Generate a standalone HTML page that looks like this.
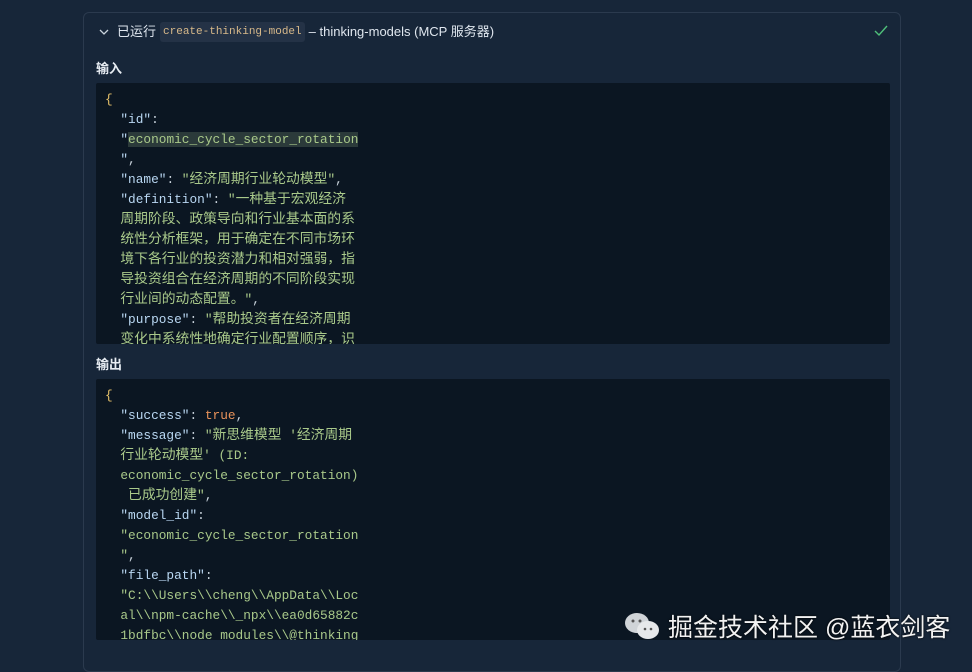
<!DOCTYPE html>
<html><head><meta charset="utf-8"><style>
*{margin:0;padding:0;box-sizing:border-box}
body{width:972px;height:661px;background:#172639;overflow:hidden;position:relative;font-family:"Liberation Sans","Noto Sans CJK SC",sans-serif;color:#e6ebf2}
.card{position:absolute;left:83px;top:12px;width:818px;height:660px;border:1px solid #2b3a4e;border-radius:6px;background:#172639}
.hdr{position:absolute;left:14px;top:9px;font-size:13px;line-height:18px;color:#dfe6ee;display:flex;align-items:center}
.chip{font-family:"Liberation Mono",monospace;font-size:11px;color:#d8b98a;background:#243246;border-radius:3px;padding:1px 3px;margin:0 4px}
.lbl{position:absolute;left:12px;font-size:13px;font-weight:bold;color:#e8edf3}
.code{position:absolute;left:12px;width:794px;height:261px;background:#0b1622;overflow:hidden;border-radius:2px;padding:7px 0 0 9px;font-family:"Liberation Mono","Noto Sans CJK SC",monospace;font-size:12.8px;line-height:20px;color:#a9c98a;white-space:pre}
.c{font-family:"Noto Sans CJK SC",sans-serif;font-size:13.8px;line-height:0}
.k{color:#b9d7f2}.p{color:#c9d3dc}.y{color:#e8c36a}.t{color:#e8925a}
.hl{background:#2b3a3a}
.wm{position:absolute;left:623px;top:608px;font-size:25px;color:#f2f2f2;text-shadow:0 0 2px #000;display:flex;align-items:center}
</style></head><body>
<div class="card">
<div class="hdr"><svg width="12" height="12" viewBox="0 0 12 12" style="margin-right:7px"><path d="M2 4l4 4 4-4" fill="none" stroke="#c9d3dc" stroke-width="1.3"/></svg>已运行<span class="chip">create-thinking-model</span>– thinking-models (MCP 服务器)</div>
<svg style="position:absolute;left:790px;top:12px" width="14" height="12" viewBox="0 0 14 12"><path d="M1 6l4 4 8-9" fill="none" stroke="#4fc07a" stroke-width="1.4"/></svg>
<div class="lbl" style="top:45px">输入</div>
<div class="code" style="top:70px"><span class="y">{</span>
  <span class="k">"id"</span><span class="p">:</span>
  <span class="k">"</span><span class="hl">economic_cycle_sector_rotation</span>
  <span class="k">"</span><span class="p">,</span>
  <span class="k">"name"</span><span class="p">:</span> "<span class="c">经济周期行业轮动模型</span>"<span class="p">,</span>
  <span class="k">"definition"</span><span class="p">:</span> "<span class="c">一种基于宏观经济</span>
  <span class="c">周期阶段、政策导向和行业基本面的系</span>
  <span class="c">统性分析框架，用于确定在不同市场环</span>
  <span class="c">境下各行业的投资潜力和相对强弱，指</span>
  <span class="c">导投资组合在经济周期的不同阶段实现</span>
  <span class="c">行业间的动态配置。</span>"<span class="p">,</span>
  <span class="k">"purpose"</span><span class="p">:</span> "<span class="c">帮助投资者在经济周期</span>
  <span class="c">变化中系统性地确定行业配置顺序，识</span></div>
<div class="lbl" style="top:341px">输出</div>
<div class="code" style="top:366px"><span class="y">{</span>
  <span class="k">"success"</span><span class="p">:</span> <span class="t">true</span><span class="p">,</span>
  <span class="k">"message"</span><span class="p">:</span> "<span class="c">新思维模型</span> '<span class="c">经济周期</span>
  <span class="c">行业轮动模型</span>' (ID:
  economic_cycle_sector_rotation)
   <span class="c">已成功创建</span>"<span class="p">,</span>
  <span class="k">"model_id"</span><span class="p">:</span>
  "economic_cycle_sector_rotation
  "<span class="p">,</span>
  <span class="k">"file_path"</span><span class="p">:</span>
  "C:\\Users\\cheng\\AppData\\Loc
  al\\npm-cache\\_npx\\ea0d65882c
  1bdfbc\\node_modules\\@thinking</div>
</div>
<div class="wm"><svg width="38" height="30" viewBox="0 0 38 30" style="margin-right:7px"><ellipse cx="14" cy="12" rx="12" ry="10" fill="#d0d4d8"/><ellipse cx="25" cy="19" rx="11" ry="9" fill="#e6e8ea"/><circle cx="10" cy="10" r="1.5" fill="#555"/><circle cx="17" cy="10" r="1.5" fill="#555"/><circle cx="22" cy="18" r="1.3" fill="#555"/><circle cx="28" cy="18" r="1.3" fill="#555"/></svg>掘金技术社区 @蓝衣剑客</div>
</body></html>
